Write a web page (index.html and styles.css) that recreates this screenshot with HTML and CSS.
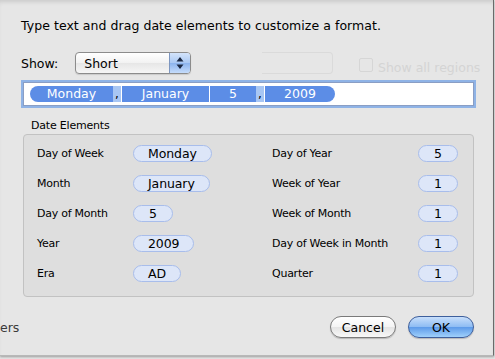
FILE: index.html
```html
<!DOCTYPE html>
<html lang="en">
<head>
    <meta charset="UTF-8">
    <title>Customize Date Format</title>
    <link rel="stylesheet" href="styles.css">
</head>
<body>
    <div class="sheet">
        <!-- window behind the sheet, showing through -->
        <div class="ghost" aria-hidden="true">
            <div class="g-popup"></div>
            <div class="g-check"></div>
            <span class="g-regions">Show all regions</span>
            <span class="g-dark">ers</span>
        </div>

        <p class="intro">Type text and drag date elements to customize a format.</p>

        <div class="show-row">
            <span class="show-label">Show:</span>
            <div class="popup">
                <span>Short</span>
                <span class="stepper">
                    <svg width="8" height="14" viewBox="0 0 8 14"><path d="M4 1 L7.5 5.5 L0.5 5.5 Z M4 13 L7.5 8.5 L0.5 8.5 Z" fill="#1c2a44"/></svg>
                </span>
            </div>
        </div>

        <div class="token-field">
            <span class="tok first">Monday</span><span class="sep">,</span><span class="tok">January</span><span class="tok">5</span><span class="sep">,</span><span class="tok last">2009</span>
        </div>

        <div class="group">
            <div class="group-title">Date Elements</div>
            <div class="group-box">
                <div class="col">
                    <div class="row"><span class="lbl">Day of Week</span><span class="pill">Monday</span></div>
                    <div class="row"><span class="lbl">Month</span><span class="pill">January</span></div>
                    <div class="row"><span class="lbl">Day of Month</span><span class="pill">5</span></div>
                    <div class="row"><span class="lbl">Year</span><span class="pill">2009</span></div>
                    <div class="row"><span class="lbl">Era</span><span class="pill">AD</span></div>
                </div>
                <div class="col right">
                    <div class="row"><span class="lbl">Day of Year</span><span class="pill">5</span></div>
                    <div class="row"><span class="lbl">Week of Year</span><span class="pill">1</span></div>
                    <div class="row"><span class="lbl">Week of Month</span><span class="pill">1</span></div>
                    <div class="row"><span class="lbl">Day of Week in Month</span><span class="pill">1</span></div>
                    <div class="row"><span class="lbl">Quarter</span><span class="pill">1</span></div>
                </div>
            </div>
        </div>

        <div class="buttons">
            <button class="btn">Cancel</button>
            <button class="btn default">OK</button>
        </div>
    </div>
</body>
</html>
```

FILE: styles.css
```css
* {
    margin: 0;
    padding: 0;
    box-sizing: border-box;
}

body {
    background: #e4e4e4;
    font-family: 'DejaVu Sans', 'Liberation Sans', sans-serif;
    color: #000;
    width: 495px;
    height: 359px;
    overflow: hidden;
}

.sheet {
    position: relative;
    width: 494px;
    height: 356px;
    background: #e6e6e6;
    border-right: 1px solid #6a6a6a;
    border-bottom: 1px solid #b8b8b8;
    box-shadow: inset 0 4px 4px -2px rgba(0,0,0,0.12), 0 1px 2px rgba(0,0,0,0.3);
    padding: 18px 20px 0 21px;
}

/* faint window behind */
.ghost {
    position: absolute;
    inset: 0;
    overflow: hidden;
    color: #d4d4d4;
    font-size: 12.5px;
}

.ghost span {
    position: absolute;
    white-space: nowrap;
}

.g-regions {
    left: 378px;
    top: 60px;
}

.ghost .g-dark {
    left: 0;
    top: 320px;
    color: #3a3a3a;
}

.g-popup {
    position: absolute;
    left: 262px;
    top: 52px;
    width: 71px;
    height: 22px;
    border: 1px solid #dadada;
    border-left: none;
    border-radius: 0 4px 4px 0;
}

.g-check {
    position: absolute;
    left: 359px;
    top: 58px;
    width: 14px;
    height: 14px;
    border: 1px solid #d6d6d6;
    border-radius: 2px;
}

.intro,
.show-row,
.token-field,
.group,
.buttons {
    position: relative;
}

.intro {
    font-size: 12.5px;
    letter-spacing: 0.05px;
    line-height: 16px;
}

.show-row {
    display: flex;
    align-items: center;
    gap: 17px;
    margin-top: 18px;
    font-size: 12.5px;
}

.popup {
    display: flex;
    align-items: center;
    justify-content: space-between;
    width: 116px;
    height: 22px;
    border: 1px solid #8c8c8c;
    border-radius: 4px;
    background: linear-gradient(#ffffff, #f2f2f2 50%, #e6e6e6 51%, #f6f6f6);
    box-shadow: 0 1px 1px rgba(0,0,0,0.12);
    padding-left: 8px;
    overflow: hidden;
}

.stepper {
    display: flex;
    align-items: center;
    justify-content: center;
    width: 21px;
    height: 100%;
    border-left: 1px solid #7d96c0;
    background: linear-gradient(#d4e4fb, #a9c8f3 50%, #8cb4ee 51%, #c5dcfb);
}

.token-field {
    display: flex;
    align-items: center;
    margin: 8px 0 0 2px;
    width: 451px;
    height: 24px;
    background: #fff;
    border: 1px solid #8a9ec4;
    box-shadow: 0 0 0 2px #8fb3e6;
    padding-left: 6px;
    font-size: 12.5px;
}

.tok {
    height: 16px;
    line-height: 16px;
    padding: 0 15px;
    background: #5c8de6;
    color: #fff;
    border-left: 1px solid #fff;
    min-width: 45px;
    text-align: center;
}

.tok.first {
    border-left: none;
    border-radius: 8px 0 0 8px;
    width: 83px;
}

.tok.last {
    border-radius: 0 8px 8px 0;
    width: 71px;
}

.tok:nth-child(3) { width: 88px; }
.tok:nth-child(4) { width: 47px; }

.sep {
    height: 16px;
    line-height: 16px;
    width: 8px;
    background: #a8c6f3;
    color: #000;
    font-size: 12px;
    text-align: center;
}

.group {
    margin: 13px 0 0 2px;
    width: 451px;
}

.group-title {
    font-size: 11px;
    line-height: 13px;
    padding-left: 8px;
    letter-spacing: -0.2px;
}

.group-box {
    display: grid;
    grid-template-columns: 235px 1fr;
    margin-top: 2px;
    height: 163px;
    border: 1px solid #c2c2c2;
    border-radius: 4px;
    background: #dedede;
    padding: 10px 15px 0 13px;
}

.col {
    display: flex;
    flex-direction: column;
    gap: 14px;
}

.row {
    display: flex;
    align-items: center;
    height: 16px;
}

.lbl {
    width: 96px;
    font-size: 11px;
    letter-spacing: -0.25px;
    white-space: nowrap;
}

.right .row {
    justify-content: space-between;
}

.pill {
    height: 17px;
    line-height: 15px;
    padding: 0 14px;
    min-width: 40px;
    text-align: center;
    font-size: 12.5px;
    letter-spacing: -0.1px;
    background: #dde6f8;
    border: 1px solid #a8bdeb;
    border-radius: 9px;
}

.buttons {
    display: flex;
    justify-content: flex-end;
    gap: 12px;
    margin-top: 19px;
    width: 453px;
}

.btn {
    width: 66px;
    height: 22px;
    border-radius: 11px;
    border: 1px solid #7a7a7a;
    background: linear-gradient(#ffffff, #f4f4f4 50%, #e4e4e4 51%, #f8f8f8);
    box-shadow: 0 1px 1px rgba(0,0,0,0.2);
    font-family: 'DejaVu Sans', sans-serif;
    font-size: 12.5px;
    color: #000;
}

.btn.default {
    border-color: #3e5f9c;
    background: linear-gradient(#c8dffb, #8dbcf3 50%, #5d9ae9 51%, #9fd0fb);
}
```
